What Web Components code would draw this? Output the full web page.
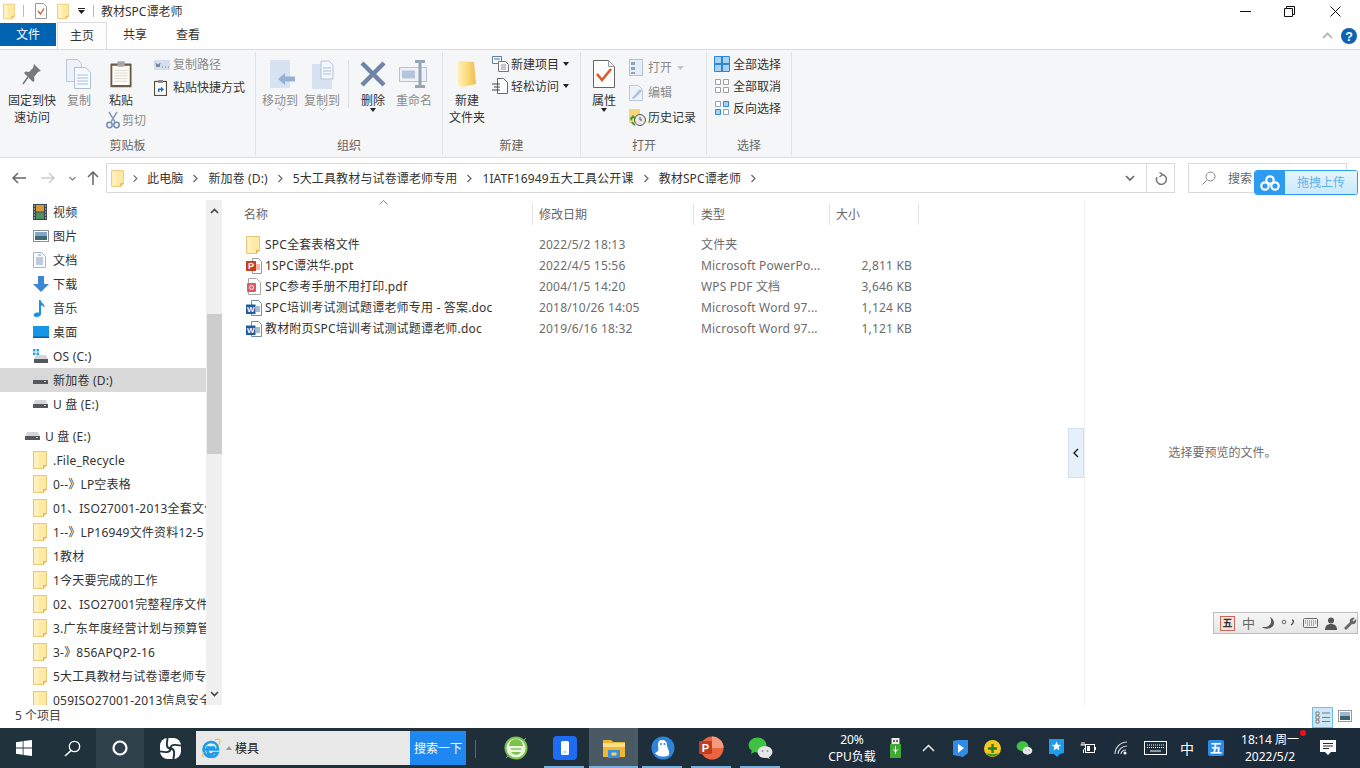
<!DOCTYPE html>
<html lang="zh">
<head>
<meta charset="utf-8">
<title>教材SPC谭老师</title>
<style>
  html, body { margin: 0; height: 100%; overflow: hidden; background: #fff; }
  body {
    width: 1360px; height: 768px; position: relative;
    display: flex; flex-direction: column;
    font: 12px/17px "Noto Sans", "Noto Sans CJK SC", sans-serif; color: #333;
  }
</style>
</head>
<body>
<fe-title></fe-title>
<fe-tabs></fe-tabs>
<fe-ribbon>
  <rb-group label="剪贴板" w="256" pad="4">
    <rb-big icon="pin" w="56">固定到快<br>速访问</rb-big>
    <rb-big icon="copy" w="38" dim>复制</rb-big>
    <rb-col w="46">
      <rb-big icon="paste" w="46">粘贴</rb-big>
      <rb-small icon="cut" h="22" style="--ib:16px;margin-left:8px" dim>剪切</rb-small>
    </rb-col>
    <rb-col w="100" style="margin-left:10px">
      <rb-small icon="copypath" h="23" dim>复制路径</rb-small>
      <rb-small icon="pastelink" h="23">粘贴快捷方式</rb-small>
    </rb-col>
  </rb-group>
  <rb-group label="组织" w="187">
    <rb-big icon="moveto" w="48" dim chev>移动到</rb-big>
    <rb-big icon="copyto" w="36" dim chev>复制到</rb-big>
    <rb-sep></rb-sep>
    <rb-big icon="del" w="34" arrow>删除</rb-big>
    <rb-big icon="rename" w="48" dim>重命名</rb-big>
  </rb-group>
  <rb-group label="新建" w="138">
    <rb-big icon="newfolder" w="48">新建<br>文件夹</rb-big>
    <rb-col w="85" style="margin-left:1px">
      <rb-small icon="newitem" h="22" arrow>新建项目</rb-small>
      <rb-small icon="easy" h="22" arrow>轻松访问</rb-small>
    </rb-col>
  </rb-group>
  <rb-group label="打开" w="126">
    <rb-big icon="props" w="46" arrow>属性</rb-big>
    <rb-col w="78" top="2" style="margin-left:2px">
      <rb-small icon="open" h="25" dim chevsm>打开</rb-small>
      <rb-small icon="edit" h="25" dim>编辑</rb-small>
      <rb-small icon="history" h="25">历史记录</rb-small>
    </rb-col>
  </rb-group>
  <rb-group label="选择" w="85" pad="7">
    <rb-col w="76">
      <rb-small icon="selall" h="22">全部选择</rb-small>
      <rb-small icon="selnone" h="22">全部取消</rb-small>
      <rb-small icon="selinv" h="22">反向选择</rb-small>
    </rb-col>
  </rb-group>
</fe-ribbon>
<fe-address></fe-address>
<fe-main>
  <fe-nav slot="nav">
    <nav-item icon="video">视频</nav-item>
    <nav-item icon="pics">图片</nav-item>
    <nav-item icon="docs">文档</nav-item>
    <nav-item icon="dl">下载</nav-item>
    <nav-item icon="music">音乐</nav-item>
    <nav-item icon="desk">桌面</nav-item>
    <nav-item icon="osdrive">OS (C:)</nav-item>
    <nav-item icon="drive" selected>新加卷 (D:)</nav-item>
    <nav-item icon="drive">U 盘 (E:)</nav-item>
    <nav-item icon="drive" top style="margin-top:8px">U 盘 (E:)</nav-item>
    <nav-item icon="folder">.File_Recycle</nav-item>
    <nav-item icon="folder">0--》LP空表格</nav-item>
    <nav-item icon="folder">01、ISO27001-2013全套文件</nav-item>
    <nav-item icon="folder">1--》LP16949文件资料12-5</nav-item>
    <nav-item icon="folder">1教材</nav-item>
    <nav-item icon="folder">1今天要完成的工作</nav-item>
    <nav-item icon="folder">02、ISO27001完整程序文件</nav-item>
    <nav-item icon="folder">3.广东年度经营计划与预算管</nav-item>
    <nav-item icon="folder">3-》856APQP2-16</nav-item>
    <nav-item icon="folder">5大工具教材与试卷谭老师专用</nav-item>
    <nav-item icon="folder">059ISO27001-2013信息安全</nav-item>
  </fe-nav>
  <fe-list slot="list">
    <file-row icon="folder" date="2022/5/2 18:13" type="文件夹" size="">SPC全套表格文件</file-row>
    <file-row icon="ppt" date="2022/4/5 15:56" type="Microsoft PowerPo..." size="2,811 KB">1SPC谭洪华.ppt</file-row>
    <file-row icon="pdf" date="2004/1/5 14:20" type="WPS PDF 文档" size="3,646 KB">SPC参考手册不用打印.pdf</file-row>
    <file-row icon="word" date="2018/10/26 14:05" type="Microsoft Word 97..." size="1,124 KB">SPC培训考试测试题谭老师专用 - 答案.doc</file-row>
    <file-row icon="word" date="2019/6/16 18:32" type="Microsoft Word 97..." size="1,121 KB">教材附页SPC培训考试测试题谭老师.doc</file-row>
  </fe-list>
  <fe-preview slot="preview"></fe-preview>
</fe-main>
<fe-status></fe-status>
<fe-taskbar></fe-taskbar>
<fe-upload></fe-upload>
<fe-ime></fe-ime>

<script>
// 图标都放在这里，按名字取
const folderSvg = (w, h) => `<svg width="${w}" height="${h}" viewBox="0 0 14 18"><path d="M.5 .5h13v14l-3 3H.5z" fill="#ffe9a3" stroke="#eac777"/><path d="M1.5 1.5h4v15h-4z" fill="#fff1c4"/><path d="M10.5 17.5v-3h3" fill="#f3cd72" stroke="#dfb65c"/></svg>`;
const drive = `<svg width="15" height="10" viewBox="0 0 15 10"><path d="M2 1h11l2 5H0z" fill="#d4d6d8"/><rect y="5" width="15" height="4" fill="#55585c"/><rect x="11" y="6" width="2" height="1" fill="#9fe08a"/></svg>`;
const icons = {
  // ribbon
  pin: `<svg width="22" height="24" viewBox="0 0 22 24"><path d="M13 2l7 7-3 1-4 5 .5 3.500-1.500 1.500-9-9 1.500-1.500 3.500.5 4-4z" fill="#77797d"/><path d="M7 15l-5 7" stroke="#77797d" stroke-width="1.500"/></svg>`,
  copy: `<svg width="26" height="30" viewBox="0 0 26 30"><path d="M.5 .5h11l4 4v18H.5z" fill="#eef2f8" stroke="#b9c7da"/><path d="M8.500 8.500h11l5 5v16h-16z" fill="#f7f9fc" stroke="#aebfd6"/><path d="M11 16h11M11 19h11M11 22h11M11 25h11" stroke="#a8bfdb"/></svg>`,
  paste: `<svg width="22" height="28" viewBox="0 0 24 30"><rect x=".5" y="3.500" width="23" height="26" rx="1" fill="#6d5a46"/><rect x="2.500" y="6" width="19" height="21" fill="#fdfcf6"/><path d="M5 11h14M5 14h14M5 17h14M5 20h14M5 23h14" stroke="#d9d5c8"/><rect x="8" y="1" width="8" height="6" rx="1" fill="#a6a6a6"/></svg>`,
  cut: `<svg width="14" height="18" viewBox="0 0 14 18"><path d="M3 1l6 10M11 1L5 11" stroke="#8b9db5" stroke-width="1.500" fill="none"/><circle cx="3.500" cy="14" r="2.700" fill="none" stroke="#6f8db5" stroke-width="1.500"/><circle cx="10.500" cy="14" r="2.700" fill="none" stroke="#6f8db5" stroke-width="1.500"/></svg>`,
  copypath: `<svg width="16" height="10" viewBox="0 0 16 10"><rect width="16" height="10" fill="#d3dfef"/><path d="M2 3l1 4 1-3 1 3 1-4M8 7h1M11 7h1M14 7h1" stroke="#6f7f96" fill="none"/></svg>`,
  pastelink: `<svg width="13" height="16" viewBox="0 0 13 16"><rect x=".5" y="1.500" width="12" height="14" fill="#fff" stroke="#5a4a38" stroke-width="1.200"/><rect x="4" y="0" width="5" height="3" fill="#8a8a8a"/><path d="M4 12V8.500h3V6.500l3 3-3 2.500V10H5.500v2z" fill="#1f6fc0"/></svg>`,
  moveto: `<svg width="32" height="28" viewBox="-6 0 32 28"><rect width="20" height="28" fill="#d8e3f2"/><path d="M8 19l7-6v3.500h10v5H15V25z" fill="#97b1d5"/></svg>`,
  copyto: `<svg width="31" height="30" viewBox="-5 -2 31 30"><rect y="3" width="20" height="25" fill="#d8e3f2"/><path d="M9 0h8l4 4v14H9z" fill="#f3f6fb" stroke="#b3c3d9"/><path d="M11 7h8M11 10h8M11 13h8" stroke="#a8bfdb"/></svg>`,
  del: `<svg width="26" height="26" viewBox="0 0 26 26"><path d="M2 2l22 22M24 2L2 24" stroke="#6f84a6" stroke-width="4.500"/></svg>`,
  rename: `<svg width="30" height="28" viewBox="0 0 30 28"><rect x=".5" y="7.500" width="27" height="14" fill="#eef2f7" stroke="#b6c2d0"/><rect x="3" y="10.500" width="13" height="8" fill="#b5c5dc"/><path d="M16 1.500h10M21 1.500v25M16 26.500h10" stroke="#97a4b6" stroke-width="3" fill="none"/></svg>`,
  newfolder: `<svg width="20" height="28" viewBox="0 0 20 28"><defs><linearGradient id="nf" x1="0" x2="1" y1="0" y2="0"><stop offset="0" stop-color="#fff0b8"/><stop offset=".5" stop-color="#fbdc7e"/><stop offset="1" stop-color="#f0bd4e"/></linearGradient></defs><path d="M1 1l16 1 2 22-14 3-4-2z" fill="url(#nf)"/></svg>`,
  newitem: `<svg width="17" height="16" viewBox="0 0 17 16"><path d="M.5 .5h9v7h-9z" fill="#fff" stroke="#5f7f9f"/><path d="M2 2h6v2H2z" fill="#9cb6d2"/><path d="M6.500 5.500h7l3 3v7h-10z" fill="#f6f6f6" stroke="#777"/><path d="M9 9h5M9 11h5M9 13h5" stroke="#999"/></svg>`,
  easy: `<svg width="16" height="16" viewBox="0 0 16 16"><path d="M5.500 .5h6l4 4v11h-10z" fill="#fff" stroke="#666"/><path d="M0 6h8M2 9h6M0 12h8" stroke="#444"/></svg>`,
  props: `<svg width="22" height="28" viewBox="0 0 22 28"><path d="M.5 .5h15l6 6v21H.5z" fill="#fff" stroke="#666"/><path d="M15.500 .5v6h6" fill="#eee" stroke="#999"/><path d="M4 14l5 6 9-11" fill="none" stroke="#e0572b" stroke-width="2.600"/></svg>`,
  open: `<svg width="14" height="17" viewBox="0 0 14 17"><rect x=".5" y=".5" width="13" height="16" fill="#e6edf6" stroke="#b4c2d4"/><path d="M2 3h4v3H2zM2 8h4v3H2zM2 13h4v2H2z" fill="#8ea5c2"/></svg>`,
  edit: `<svg width="15" height="16" viewBox="0 0 15 16"><path d="M.5 .5h9l4 4v11H.5z" fill="#edf2f9" stroke="#bccadc"/><path d="M3 13l8-9 2 2-8 8z" fill="#a9c1df"/></svg>`,
  history: `<svg width="17" height="17" viewBox="0 0 17 17"><path d="M0 0h11v14H0z" fill="#f6d677"/><circle cx="11" cy="11" r="5.500" fill="#e8e8e8" stroke="#555"/><path d="M11 8v3h2" stroke="#555" fill="none"/><path d="M1 9l3-3 3 3-1 1-2-1-2 3z" fill="#3c9a32"/><path d="M3 13a5 5 0 0 0 3 3" stroke="#3c9a32" stroke-width="2" fill="none"/></svg>`,
  selall: `<svg width="16" height="16" viewBox="0 0 16 16"><path d="M.5 .5h15v15H.5z" fill="#a8d0f2" stroke="#2f86d2"/><path d="M0 7h16v2H0zM7 0h2v16H7z" fill="#2f86d2"/></svg>`,
  selnone: `<svg width="16" height="16" viewBox="0 0 16 16"><path d="M1.500 1.500h5v5h-5zM9.500 1.500h5v5h-5zM1.500 9.500h5v5h-5zM9.500 9.500h5v5h-5z" fill="#fff" stroke="#a0a0a0"/></svg>`,
  selinv: `<svg width="16" height="16" viewBox="0 0 16 16"><path d="M1.500 1.500h5v5h-5zM9.500 9.500h5v5h-5z" fill="#fff" stroke="#8fa4bb"/><path d="M9.500 1.500h5v5h-5zM1.500 9.500h5v5h-5z" fill="#a8d0f2" stroke="#2f86d2"/></svg>`,
  // 导航窗格
  video: `<svg width="14" height="16" viewBox="0 0 14 16"><rect width="14" height="16" fill="#3c4452"/><rect x="3" y="1" width="8" height="6.500" fill="#d79b35"/><rect x="3" y="8.500" width="8" height="6.500" fill="#4f8f5f"/><path d="M.8 2h1.200M.8 5h1.200M.8 8h1.200M.8 11h1.200M.8 14h1.200M12 2h1.200M12 5h1.200M12 8h1.200M12 11h1.200M12 14h1.200" stroke="#ddd"/></svg>`,
  pics: `<svg width="16" height="12" viewBox="0 0 16 12"><rect x=".5" y=".5" width="15" height="11" fill="#fff" stroke="#8a8f96"/><rect x="2" y="2" width="12" height="4" fill="#7fa8c9"/><path d="M2 6h12v4H2z" fill="#3f6b6f"/></svg>`,
  docs: `<svg width="13" height="16" viewBox="0 0 13 16"><path d="M.5 .5h8l4 4v11H.5z" fill="#fafcff" stroke="#a7b4c4"/><path d="M3 6h7M3 8h7M3 10h7M3 12h7M5 3h3" stroke="#7f9cba"/></svg>`,
  dl: `<svg width="16" height="16" viewBox="0 0 16 16"><path d="M5 0h6v8h5l-8 8-8-8h5z" fill="#3d86d6"/></svg>`,
  music: `<svg width="13" height="17" viewBox="0 0 13 17"><path d="M6 0h1.500c.5 3 4.500 3.500 4 8-1-2-2.500-2.500-3.500-2.500V14c0 1.800-2 3-4.500 3S0 15.500 1 14s3.500-2 5-1.200z" fill="#1f8fe0"/></svg>`,
  desk: `<svg width="16" height="12" viewBox="0 0 16 12"><rect width="16" height="11" fill="#1597e5"/><rect y="10.500" width="16" height="1.500" fill="#0b5ea8"/></svg>`,
  osdrive: `<svg width="16" height="15" viewBox="0 0 16 15"><path d="M0 0h2.500v2.500H0zM3.500 0H6v2.500H3.500zM0 3.500h2.500V6H0zM3.500 3.500H6V6H3.500z" fill="#2aa5d8"/><path d="M3 6h10l2 4H1z" fill="#d4d6d8"/><rect x="1" y="10" width="14" height="4" fill="#55585c"/></svg>`,
  drive,
  folder: folderSvg(14, 18),
  ppt: `<svg width="16" height="16" viewBox="0 0 16 16"><path d="M6.500 .5h6l3 3v12h-9z" fill="#fff" stroke="#9a9a9a"/><path d="M10 6h4v6h-4z" fill="#f3b7a6"/><rect y="3" width="10" height="10" fill="#c8401f"/><text x="5" y="11" font-size="9" font-weight="700" text-anchor="middle" fill="#fff" font-family="Liberation Sans">P</text></svg>`,
  pdf: `<svg width="15" height="17" viewBox="0 0 15 17"><path d="M2.500 .5h8l4 4v12h-12z" fill="#fff" stroke="#a8a8a8"/><rect x="1" y="5" width="9" height="9" rx="1" fill="#dc5a64"/><circle cx="5.500" cy="9.500" r="2" fill="none" stroke="#fff"/></svg>`,
  word: `<svg width="16" height="16" viewBox="0 0 16 16"><path d="M5.500 .5h7l3 3v12h-10z" fill="#fff" stroke="#6f8caf"/><path d="M10 7h4M10 9h4M10 11h4" stroke="#4d78ac"/><rect y="4.500" width="9.500" height="9.500" fill="#1f5aa6"/><text x="4.750" y="12.300" font-size="8" font-weight="700" text-anchor="middle" fill="#fff" font-family="Liberation Sans">W</text></svg>`,
  // 任务栏
  win: `<svg width="16" height="16" viewBox="0 0 16 16"><path d="M0 2.300l6.700-1v6.200H0zM7.500 1.100L16 0v7.500H7.500zM0 8.500h6.700v6.200l-6.700-1zM7.500 8.500H16V16l-8.500-1.100z" fill="#fff"/></svg>`,
  search: `<svg width="17" height="17" viewBox="0 0 17 17"><circle cx="10.500" cy="6.500" r="5.200" fill="none" stroke="#fff" stroke-width="1.300"/><path d="M7 10.500L1 16" stroke="#fff" stroke-width="1.600"/></svg>`,
  ring: `<svg width="16" height="16" viewBox="0 0 16 16"><circle cx="8" cy="8" r="6.500" fill="none" stroke="#fff" stroke-width="2.200"/></svg>`,
  wheel: `<svg width="21" height="21" viewBox="0 0 22 22"><rect width="22" height="22" rx="8" fill="#fff"/><g fill="none" stroke="#20323b" stroke-width="2"><path d="M11 11C6 11 7 5 8 0"/><path d="M11 11C11 6 17 7 22 8"/><path d="M11 11C16 11 15 17 14 22"/><path d="M11 11C11 16 5 15 0 14"/></g><circle cx="11" cy="11" r="1.500" fill="#20323b"/></svg>`,
  ie: `<svg width="20" height="20" viewBox="0 0 20 20"><path d="M3 11.500h14C17 7 14 4 10 4S2.500 7.500 2.500 11.500 6 19 10 19c3 0 5.500-1.500 6.500-4h-4c-.5 1-1.500 1.500-2.500 1.500-2 0-3.500-1.500-3.500-3.500V9.500H14" fill="none" stroke="#1e9bea" stroke-width="2.600"/><path d="M14 2c3-1.500 5-1 5 1s-1 3-2 5M3 14c-2 3-2 5 0 5" fill="none" stroke="#f0b428" stroke-width="1"/></svg>`,
  greene: `<svg width="24" height="24" viewBox="0 0 24 24"><circle cx="12" cy="12" r="10.500" fill="#eaf5dc" stroke="#7cc24f" stroke-width="2"/><path d="M5 10a7 7 0 0 1 14 0zM7 16a6 6 0 0 0 10 0z" fill="#7cc24f"/><path d="M7 13h10" stroke="#5f9f3a"/><path d="M2 22l3-3M22 2l-3 3" stroke="#6cbd3f"/></svg>`,
  phone: `<svg width="24" height="24" viewBox="0 0 24 24"><rect width="24" height="24" rx="4" fill="#1e6cf5"/><rect x="8" y="5" width="8" height="14" rx="1.500" fill="#fff"/><rect x="10.500" y="15.500" width="3" height="1" fill="#7aa6f5"/></svg>`,
  explorer: `<svg width="22" height="20" viewBox="0 0 22 20"><path d="M0 2h8l2 2h12v15H0z" fill="#f2b632"/><rect y="5" width="22" height="4" fill="#ffe08a"/><rect x="5" y="12" width="12" height="8" fill="#3a8fd9"/><rect x="8.500" y="14.500" width="5" height="3" fill="#f7d067"/></svg>`,
  qq: `<svg width="24" height="24" viewBox="0 0 24 24"><circle cx="12" cy="12" r="11.500" fill="#2f86d9"/><path d="M11 4c3 0 5 2 5 5 0 3 3 6 2 10-3 2-9 2-12 0l-2-2 3-2c1-2 0-4 0-6 0-3 1-5 4-5z" fill="#fff"/><circle cx="10" cy="8" r="1" fill="#2f86d9"/><circle cx="13.500" cy="8" r="1" fill="#2f86d9"/></svg>`,
  pptapp: `<svg width="25" height="24" viewBox="0 0 25 24"><circle cx="13" cy="12" r="11.500" fill="#e9643f"/><path d="M13 .5A11.500 11.500 0 0 1 24.500 12H13z" fill="#f59a7e"/><rect y="5" width="13" height="13" rx="1" fill="#c23d1f"/><text x="6.500" y="15.500" font-size="11" font-weight="700" text-anchor="middle" fill="#fff" font-family="Liberation Sans">P</text></svg>`,
  wechat: `<svg width="25" height="23" viewBox="0 0 25 23"><ellipse cx="9.500" cy="8" rx="9" ry="7.500" fill="#3fc142"/><path d="M4 13l-1 4 5-3z" fill="#3fc142"/><ellipse cx="17" cy="15" rx="7.500" ry="6" fill="#e6e6e6"/><path d="M20 19l2 3-5-2z" fill="#e6e6e6"/><circle cx="14.500" cy="14" r="1" fill="#999"/><circle cx="19.500" cy="14" r="1" fill="#999"/></svg>`,
  usb: `<svg width="11" height="20" viewBox="0 0 11 20"><rect x="1.500" width="8" height="6" fill="#e8e8e8"/><path d="M3 2h2v2H3zM6 2h2v2H6z" fill="#666"/><rect y="6" width="11" height="14" fill="#3ea935"/><path d="M5.500 8v8M3 11l2.500 3L8 11" stroke="#fff" fill="none"/></svg>`,
  up: `<svg width="13" height="8" viewBox="0 0 13 8"><path d="M1 7l5.500-5.500L12 7" fill="none" stroke="#fff" stroke-width="1.300"/></svg>`,
  flag: `<svg width="15" height="17" viewBox="0 0 15 17"><path d="M0 1l5-1h10v13l-5 4-10-2z" fill="#2f8ce6"/><path d="M5 4l6 4-6 5z" fill="#fff"/></svg>`,
  plus360: `<svg width="17" height="17" viewBox="0 0 17 17"><circle cx="8.500" cy="8.500" r="8.500" fill="#f4c81c"/><path d="M2 13a8 8 0 0 0 13 0c-3 1.500-9 1.500-13 0z" fill="#3a8f2f"/><path d="M8.500 4v9M4 8.500h9" stroke="#2b7d22" stroke-width="2.400"/></svg>`,
  wechat2: `<svg width="17" height="15" viewBox="0 0 25 23"><ellipse cx="9.500" cy="8" rx="9" ry="7.500" fill="#3fc142"/><ellipse cx="17" cy="15" rx="7.500" ry="6" fill="#e6e6e6"/><circle cx="14.500" cy="14" r="1" fill="#999"/><circle cx="19.500" cy="14" r="1" fill="#999"/></svg>`,
  star: `<svg width="15" height="18" viewBox="0 0 15 18"><path d="M0 0h15v14l-4 1-3 3-3-3H0z" fill="#1f9be8"/><path d="M7.500 2.500l1.300 3.200 3.500.2-2.700 2.200.9 3.400-3-1.900-3 1.900.9-3.400-2.700-2.200 3.500-.2z" fill="#fff"/></svg>`,
  battery: `<svg width="16" height="13" viewBox="0 0 16 13"><rect x="5.500" y="2.500" width="9" height="8" fill="none" stroke="#fff"/><rect x="15" y="5" width="1" height="3" fill="#fff"/><rect x="7" y="4" width="3" height="5" fill="#fff"/><path d="M2 0v3M4 0v3M.5 3h5v2.500L3.500 8v3" stroke="#fff" fill="none"/></svg>`,
  wifi: `<svg width="14" height="14" viewBox="0 0 14 14"><path d="M1 13C1 7 6 1 13 1M4 13c0-4 4-8 9-8M7 13c0-2 2-4 5-4" fill="none" stroke="#cfd4d8" stroke-width="1.100"/><circle cx="11" cy="12" r="1.500" fill="#fff"/></svg>`,
  kbd: `<svg width="23" height="14" viewBox="0 0 23 14"><rect x=".5" y=".5" width="22" height="13" fill="none" stroke="#fff"/><path d="M3 4h17M3 6.500h17" stroke="#fff" stroke-dasharray="1 1"/><path d="M6 10h11" stroke="#fff"/></svg>`,
  notify: `<svg width="16" height="16" viewBox="0 0 16 16"><path d="M0 0h16v12h-5l-3 3-3-3H0z" fill="#fff"/><path d="M3 3.500h10M3 6h10M3 8.500h6" stroke="#1c2a3b"/></svg>`,
};

// 小工具：定义一个带 shadow root 的元素
function make(tag, css, html) {
  customElements.define(tag, class extends HTMLElement {
    connectedCallback() {
      if (this.shadowRoot) return;
      this.attachShadow({ mode: 'open' });
      const body = typeof html === 'function' ? html(this) : html;
      this.shadowRoot.innerHTML = `<style>${css}</style>${body}`;
    }
  });
}

make('x-icon', ':host{display:inline-flex;align-items:center;justify-content:center;line-height:0}',
  el => icons[el.getAttribute('name')] || '');

make('fe-title', `
  :host{display:flex;align-items:center;height:22px;flex:none;position:relative}
  .i{display:flex;width:12px;margin-left:3px}
  .s{width:1px;height:12px;background:#bbb}
  .t{margin-left:7px}
  .c{margin-left:auto;display:flex;height:22px}
  .b{width:46px;display:flex;align-items:center;justify-content:center;box-sizing:border-box}
`, `
  <span class="i" style="margin-left:3px">${folderSvg(12, 17)}</span>
  <span class="s" style="margin-left:8px"></span>
  <span class="i" style="margin-left:11px"><svg width="12" height="16" viewBox="0 0 12 16"><path d="M.5 .5h8l3 3v12H.5z" fill="#fff" stroke="#999"/><path d="M3 8l2.500 3L9 5.500" fill="none" stroke="#d9552c" stroke-width="1.300"/></svg></span>
  <span class="i" style="margin-left:10px">${folderSvg(12, 17)}</span>
  <span class="i" style="margin-left:7px;justify-content:center;width:10px"><svg width="7" height="6" viewBox="0 0 7 6"><path d="M0 0h7v1H0zM0 2h7L3.500 6z" fill="#222"/></svg></span>
  <span class="s" style="margin-left:7px"></span>
  <span class="t">教材SPC谭老师</span>
  <span class="c">
    <span class="b" style="width:44px"><svg width="11" height="1"><rect width="11" height="1" fill="#111"/></svg></span>
    <span class="b" style="padding-right:2px"><svg width="11" height="11" viewBox="0 0 11 11"><path d="M.5 2.500h8v8h-8zM2.500 2.500v-2h8v8h-2" fill="none" stroke="#111"/></svg></span>
    <span class="b" style="width:45px"><svg width="11" height="11" viewBox="0 0 11 11"><path d="M.5 .5l10 10M10.500 .5l-10 10" stroke="#111"/></svg></span>
    <span style="width:2px"></span>
  </span>
`);

make('fe-tabs', `
  :host{display:flex;height:28px;flex:none;box-sizing:border-box;border-bottom:1px solid #dadbdc;position:relative}
  .f{width:56px;height:23px;margin-top:1px;background:#0063b1;color:#fff;text-align:center;line-height:23px}
  .h{width:50px;height:27px;margin-left:1px;margin-bottom:-1px;box-sizing:border-box;border:1px solid #dadbdc;border-bottom:0;text-align:center;line-height:26px;background:#fdfdfd}
  .t{text-align:center;line-height:25px;width:24px}
  .r{margin-left:auto;display:flex;align-items:center;gap:8px;padding:0 3px 0 0}
`, `
  <div class="f">文件</div>
  <div class="h">主页</div>
  <div class="t" style="margin-left:16px">共享</div>
  <div class="t" style="margin-left:29px">查看</div>
  <div class="r">
    <svg width="11" height="7" viewBox="0 0 11 7"><path d="M1 6l4.500-4.500L10 6" fill="none" stroke="#bdbdbd" stroke-width="2"/></svg>
    <svg width="16" height="16" viewBox="0 0 16 16"><circle cx="8" cy="8" r="8" fill="#0f62b0"/><text x="8" y="12.500" font-size="12.500" font-weight="700" text-anchor="middle" fill="#fff" font-family="Liberation Sans">?</text></svg>
  </div>
`);

make('fe-ribbon', `
  :host{display:flex;height:108px;flex:none;box-sizing:border-box;background:#f5f6f7;border-bottom:1px solid #dadbdc}
`, '<slot></slot>');

make('rb-group', `
  :host{display:grid;grid-template-rows:86px 16px;box-sizing:border-box;border-right:1px solid #e0e1e3;height:103px;margin-top:2px;color:#333}
  .b{display:flex;align-items:flex-start;padding-top:1px;box-sizing:border-box}
  .l{text-align:center;color:#666;line-height:16px}
`, el => `
  <style>:host{width:${el.getAttribute('w')}px}.b{padding-left:${el.getAttribute('pad') || 0}px}</style>
  <div class="b"><slot></slot></div>
  <div class="l">${el.getAttribute('label')}</div>
`);

make('rb-big', `
  :host{display:block;flex:none;text-align:center;padding-top:3px;line-height:17px;box-sizing:border-box}
  :host([dim]){color:#8c8c8c}
  .i{height:36px;display:flex;align-items:center;justify-content:center}
  .a{width:0;height:0;margin:-1px auto 0;border:3px solid transparent;border-top:4px solid #222;border-bottom:0}
  .c{display:block;margin:-2px auto 0}
`, el => `
  <style>:host{width:${el.getAttribute('w')}px}</style>
  <div class="i"><x-icon name="${el.getAttribute('icon')}"></x-icon></div>
  <div><slot></slot></div>
  ${el.hasAttribute('arrow') ? '<div class="a"></div>' : ''}
  ${el.hasAttribute('chev') ? '<svg class="c" width="7" height="4" viewBox="0 0 7 4"><path d="M.5 .5l3 3 3-3" fill="none" stroke="#b4b4b4"/></svg>' : ''}
`);

make('rb-col', ':host{display:block;flex:none}', el => `
  <style>:host{width:${el.getAttribute('w')}px;padding-top:${el.getAttribute('top') || 0}px}</style><slot></slot>`);

make('rb-sep', ':host{display:block;flex:none;width:1px;height:48px;margin:7px 7px 0 8px;background:#dfe0e2}', '');

make('rb-small', `
  :host{display:flex;align-items:center;white-space:nowrap}
  :host([dim]){color:#8c8c8c}
  .i{width:var(--ib,19px);flex:none;display:flex;justify-content:flex-start}
  .a{margin-left:4px;width:0;height:0;border:3px solid transparent;border-top:4px solid #222;border-bottom:0}
  .c{margin-left:5px}
`, el => `
  <style>:host{height:${el.getAttribute('h')}px}</style>
  <span class="i"><x-icon name="${el.getAttribute('icon')}"></x-icon></span>
  <slot></slot>
  ${el.hasAttribute('arrow') ? '<span class="a"></span>' : ''}
  ${el.hasAttribute('chevsm') ? '<svg class="c" width="7" height="4" viewBox="0 0 7 4"><path d="M0 0h7L3.500 4z" fill="#c4c4c4"/></svg>' : ''}
`);

const chevron = '<svg class="cv" width="25" height="9" viewBox="0 0 25 9"><path d="M10.500 1l3.500 3.500L10.500 8" fill="none" stroke="#666" stroke-width="1.200"/></svg>';
make('fe-address', `
  :host{display:flex;height:42px;flex:none;align-items:flex-start;padding-top:5px;box-sizing:border-box}
  .n{height:30px;display:flex;align-items:center;justify-content:center;flex:none}
  .box{height:30px;box-sizing:border-box;border:1px solid #d9d9d9;display:flex;align-items:center;flex:none}
  .cv{flex:none}
  .crumb{width:1041px;margin-left:6px;padding-left:4px;letter-spacing:.13px}
  .r{width:29px;margin-left:-1px;justify-content:center}
  .s{width:159px;margin-left:13px;padding-left:13px;color:#666;gap:12px}
`, `
  <span class="n" style="width:38px"><svg width="14" height="12" viewBox="0 0 14 12"><path d="M6 1L1 6l5 5M1 6h13" fill="none" stroke="#666" stroke-width="1.500"/></svg></span>
  <span class="n" style="width:20px"><svg width="14" height="12" viewBox="0 0 14 12"><path d="M8 1l5 5-5 5M13 6H0" fill="none" stroke="#ccc" stroke-width="1.500"/></svg></span>
  <span class="n" style="width:28px"><svg width="7" height="5" viewBox="0 0 7 5"><path d="M.5 1l3 3 3-3" fill="none" stroke="#888" stroke-width="1.300"/></svg></span>
  <span class="n" style="width:14px"><svg width="12" height="14" viewBox="0 0 12 14"><path d="M1 6l5-5 5 5M6 1v13" fill="none" stroke="#666" stroke-width="1.500"/></svg></span>
  <div class="box crumb">
    ${folderSvg(13, 17)}
    <svg class="cv" width="23" height="9" viewBox="0 0 25 9"><path d="M10.500 1l3.500 3.500L10.500 8" fill="none" stroke="#666" stroke-width="1.200"/></svg>
    <span>此电脑</span>${chevron}<span>新加卷 (D:)</span>${chevron}<span>5大工具教材与试卷谭老师专用</span>${chevron}<span>1IATF16949五大工具公开课</span>${chevron}<span>教材SPC谭老师</span>${chevron}
    <svg style="margin-left:auto;margin-right:11px" width="10" height="7" viewBox="0 0 10 7"><path d="M1 1l4 4 4-4" fill="none" stroke="#666" stroke-width="1.600"/></svg>
  </div>
  <div class="box r"><svg width="12" height="13" viewBox="0 0 12 13"><path d="M7.500 2.500A5 5 0 1 1 2 5M4.500 .5l3 2-3 2.500" fill="none" stroke="#777" stroke-width="1.500"/></svg></div>
  <div class="box s"><svg width="14" height="14" viewBox="0 0 14 14"><circle cx="8.500" cy="5.500" r="4.500" fill="none" stroke="#888"/><path d="M5 9l-4.500 4.500" stroke="#888"/></svg><span>搜索</span></div>
`);

make('fe-main', `
  :host{display:flex;height:506px;flex:none}
  .t{flex:none;width:16px;height:50px;align-self:center;box-sizing:border-box;background:#e6f0fa;border:1px solid #d3e2f2;display:flex;align-items:center;justify-content:center}
`, `
  <slot name="nav"></slot><slot name="list"></slot>
  <div class="t"><svg width="6" height="10" viewBox="0 0 6 10"><path d="M5 1L1 5l4 4" fill="none" stroke="#111" stroke-width="1.300"/></svg></div>
  <slot name="preview"></slot>
`);

make('fe-nav', `
  :host{display:flex;width:222px;flex:none;height:505px;overflow:hidden}
  .l{width:206px;flex:none;overflow:hidden}
  .sb{width:16px;flex:none;background:#f0f0f0;display:flex;flex-direction:column;align-items:center;box-sizing:border-box}
  .th{width:15px;height:140px;margin-top:92px;background:#cdcdcd}
  .u{height:22px;display:flex;align-items:center;justify-content:center}
`, `
  <div class="l"><slot></slot></div>
  <div class="sb">
    <div class="u"><svg width="9" height="6" viewBox="0 0 9 6"><path d="M1 5l3.500-3.500L8 5" fill="none" stroke="#444" stroke-width="1.600"/></svg></div>
    <div class="th"></div>
    <div class="u" style="margin-top:auto"><svg width="9" height="6" viewBox="0 0 9 6"><path d="M1 1l3.500 3.500L8 1" fill="none" stroke="#444" stroke-width="1.600"/></svg></div>
  </div>
`);

make('nav-item', `
  :host{display:flex;align-items:center;height:24px;white-space:nowrap;padding-left:33px;box-sizing:border-box;overflow:hidden;letter-spacing:.2px}
  :host([selected]){background:#d9d9d9}
  :host([top]){padding-left:25px}
  .i{width:20px;flex:none;display:flex}
`, el => `
  <span class="i"><x-icon name="${el.getAttribute('icon')}"></x-icon></span><slot></slot>
`);

make('fe-list', `
  :host{display:block;width:846px;flex:none;padding-left:14px;box-sizing:border-box}
  .h{display:grid;grid-template-columns:297px 161px 136px 89px;height:34px;padding-top:3px;box-sizing:border-box;color:#666}
  .h div{height:22px;line-height:24px;box-sizing:border-box;border-right:1px solid #e5e5e5;position:relative}
  .car{position:absolute;left:143px;top:-3px}
`, `
  <div class="h">
    <div style="padding-left:8px">名称<svg class="car" width="9" height="5" viewBox="0 0 9 5"><path d="M.5 4.500l4-4 4 4" fill="none" stroke="#888"/></svg></div>
    <div style="padding-left:6px">修改日期</div>
    <div style="padding-left:7px">类型</div>
    <div style="padding-left:6px">大小</div>
  </div>
  <slot></slot>
`);

make('file-row', `
  :host{display:grid;grid-template-columns:297px 161px 136px 89px;height:21px;line-height:21px;white-space:nowrap;letter-spacing:.18px}
  .n{display:flex;align-items:center;padding-left:10px;color:#333}
  .i{width:19px;flex:none;display:flex}
  .d{padding-left:6px;color:#6d6d6d}
  .t{padding-left:7px;color:#6d6d6d}
  .s{text-align:right;padding-right:7px;color:#6d6d6d}
`, el => `
  <div class="n"><span class="i"><x-icon name="${el.getAttribute('icon')}"></x-icon></span><slot></slot></div>
  <div class="d">${el.getAttribute('date')}</div>
  <div class="t">${el.getAttribute('type')}</div>
  <div class="s">${el.getAttribute('size')}</div>
`);

make('fe-preview', `
  :host{display:flex;flex:1;align-items:center;justify-content:center;border-left:1px solid #f0f0f0;color:#6d6d6d;height:505px;box-sizing:border-box}
`, '选择要预览的文件。');

make('fe-status', `
  :host{display:flex;align-items:center;height:22px;flex:none;padding-left:15px;color:#444;position:relative;line-height:20px;padding-bottom:2px;box-sizing:border-box}
  .v{margin-left:auto;display:flex;align-items:center;margin-right:8px;gap:5px;margin-top:2px}
  .a{width:21px;height:21px;box-sizing:border-box;background:#cce8f7;border:1px solid #70bfe6;display:flex;align-items:center;justify-content:center}
  .b{width:14px;height:14px;display:flex}
`, `
  5 个项目
  <div class="v">
    <span class="a"><svg width="16" height="13" viewBox="0 0 16 13"><path d="M1 1h3v3H1zM1 5h3v3H1zM1 9h3v3H1z" fill="#fff" stroke="#777"/><path d="M7 2h8M7 6.500h8M7 10.500h8" stroke="#777"/></svg></span>
    <span class="b"><svg width="14" height="12" viewBox="0 0 14 12"><rect x=".5" y=".5" width="13" height="11" fill="#fff" stroke="#999"/><path d="M2 2h10v4H2z" fill="#9cb7cf"/><path d="M2 6h10v4H2z" fill="#3f5f6a"/></svg></span>
  </div>
`);

const tb = (name, w, extra = '') => `<span class="c ${extra}" style="width:${w}px"><x-icon name="${name}"></x-icon></span>`;
make('fe-taskbar', `
  :host{display:flex;height:40px;flex:none;background:linear-gradient(90deg,#20323b,#1c2b3a);color:#fff;white-space:nowrap}
  .c{height:40px;display:flex;align-items:center;justify-content:center;flex:none;position:relative;box-sizing:border-box}
  .on{background:#2e404a}
  .ex{background:#4a5a64}
  .run::after{content:"";position:absolute;left:4px;right:5px;bottom:0;height:2px;background:#7ab0de}
  .ex::after{left:0;right:0}
  .sbox{display:flex;margin-top:3px;height:34px;width:270px;flex:none}
  .in{flex:1;background:#e8e8e8;color:#222;display:flex;align-items:center;padding-left:5px}
  .in i{width:0;height:0;margin:0 3px 0 5px;border:3px solid transparent;border-bottom:4px solid #999;border-top:0}
  .go{width:56px;background:#1e88f0;display:flex;align-items:center;justify-content:center}
  .dv{width:25px;flex:none;padding:12px 0 0 9px;box-sizing:border-box}
  .dv span{display:block;width:1px;height:18px;background:#5a6a74}
  .tr{margin-left:auto;display:flex;width:534px;flex:none}
  .tx{flex-direction:column;line-height:17px;text-align:center}
  .dot{position:absolute;right:4px;top:2px;width:6px;height:6px;border-radius:50%;background:#f0101c}
`, `
  ${tb('win', 48)}${tb('search', 48)}${tb('ring', 48, 'on')}${tb('wheel', 52)}
  <div class="sbox">
    <div class="in"><x-icon name="ie"></x-icon><i></i>模具</div>
    <div class="go">搜索一下</div>
  </div>
  <div class="dv"><span></span></div>
  ${tb('greene', 49)}${tb('phone', 49, 'run')}${tb('explorer', 49, 'run ex')}${tb('qq', 49, 'run')}${tb('pptapp', 49, 'run')}${tb('wechat', 49, 'run')}
  <div class="tr">
    <span class="c tx" style="width:52px"><span>20%</span><span>CPU负载</span></span>
    ${tb('usb', 34)}${tb('up', 32)}${tb('flag', 32)}${tb('plus360', 32)}${tb('wechat2', 32)}${tb('star', 32)}${tb('battery', 32)}${tb('wifi', 34)}${tb('kbd', 34)}
    <span class="c" style="width:30px;font-size:14px">中</span>
    <span class="c" style="width:28px"><svg width="16" height="16" viewBox="0 0 16 16"><rect width="16" height="16" rx="2" fill="#2f8ce6"/><text x="8" y="12.500" font-size="12" font-weight="700" text-anchor="middle" fill="#fff" font-family="Noto Sans CJK SC">五</text></svg></span>
    <span class="c tx" style="width:80px"><span>18:14 周一</span><span>2022/5/2</span><span class="dot"></span></span>
    ${tb('notify', 35)}
  </div>
`);

// 网盘的悬浮按钮，盖在搜索框上
make('fe-upload', `
  :host{position:absolute;left:1254px;top:170px;width:104px;height:25px;display:flex;border-radius:3px;overflow:hidden;box-sizing:border-box;border:1px solid #2d9bf0}
  .a{width:30px;background:#2d9bf0;display:flex;align-items:center;justify-content:center}
  .b{flex:1;background:linear-gradient(#e6f5fd,#c9e9fb);color:#5fb2e8;text-align:center;line-height:24px}
`, `
  <span class="a"><svg width="20" height="16" viewBox="0 0 20 16"><circle cx="10" cy="5" r="3.700" fill="none" stroke="#fff" stroke-width="2.200"/><circle cx="5" cy="11" r="3.700" fill="none" stroke="#fff" stroke-width="2.200"/><circle cx="15" cy="11" r="3.700" fill="none" stroke="#fff" stroke-width="2.200"/></svg></span>
  <span class="b">拖拽上传</span>
`);

// 输入法状态条
make('fe-ime', `
  :host{position:absolute;left:1213px;top:612px;width:145px;height:22px;box-sizing:border-box;border:1px solid #bdbdbd;background:linear-gradient(#f6f6f6,#e6e6e6);display:flex;align-items:center;color:#555;padding-left:6px;gap:7px}
  .w{width:15px;height:15px;box-sizing:border-box;border:1px solid #c9665c;background:#f7e4dc;color:#333;font-size:10px;line-height:13px;text-align:center;font-weight:700}
  .z{font-size:13px;color:#666}
`, `
  <span class="w">五</span><span class="z">中</span>
  <svg width="12" height="12" viewBox="0 0 12 12"><path d="M8 0c3 5 0 11-8 10 3 3 12 2 12-4 0-3-2-5-4-6z" fill="#555"/></svg>
  <svg width="15" height="8" viewBox="0 0 15 8"><circle cx="3" cy="3" r="1.800" fill="none" stroke="#666"/><path d="M11 1c2 0 2 3-1 5" fill="none" stroke="#555" stroke-width="1.400"/></svg>
  <svg width="15" height="10" viewBox="0 0 15 10"><rect x=".5" y=".5" width="14" height="9" rx="1" fill="#eee" stroke="#666"/><path d="M2 3h11M2 5h11M4 7h7" stroke="#666" stroke-dasharray="1 1"/></svg>
  <svg width="12" height="13" viewBox="0 0 12 13"><circle cx="6" cy="3.500" r="3" fill="#555"/><path d="M0 13c0-4 2-6 6-6s6 2 6 6z" fill="#555"/></svg>
  <svg width="13" height="13" viewBox="0 0 13 13"><path d="M0 11l6-6c-1-3 2-5 5-4L8.500 3.500l1 1L12 2c1 3-1 6-4 5l-6 6z" fill="#666"/></svg>
`);
</script>
</body>
</html>
